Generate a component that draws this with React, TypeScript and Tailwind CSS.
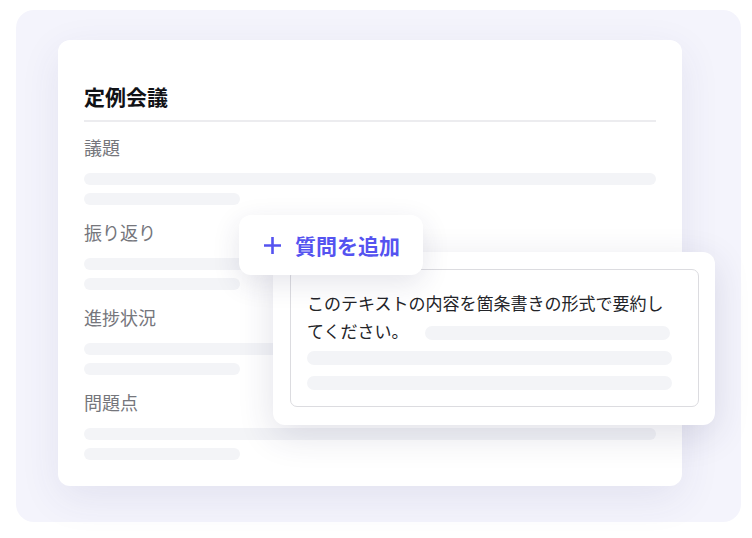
import React from 'react';

const SECTIONS = ['議題', '振り返り', '進捗状況', '問題点'];

function Bars() {
  return (
    <>
      <div className="mt-[14px] h-[12px] w-full rounded-full bg-[#f3f4f7]" />
      <div className="mt-[8px] h-[12px] w-[156px] rounded-full bg-[#f3f4f7]" />
    </>
  );
}

export default function App() {
  return (
    <div
      className="w-[752px] h-[538px] bg-white overflow-hidden pt-[10px] pl-4"
      style={{ fontFamily: '"Noto Sans CJK JP", "Noto Sans", sans-serif' }}
    >
      <div className="relative w-[725px] h-[512px] rounded-[18px] bg-[#f4f4fc] pt-[30px] pl-[42px]">
        {/* Meeting notes card */}
        <div className="w-[624px] h-[446px] rounded-[12px] bg-white px-[26px] pt-[43px] shadow-[0_12px_40px_rgba(60,60,120,0.09)]">
          <h1 className="text-[21px] leading-[26px] font-bold text-[#111216]">定例会議</h1>
          <div className="mt-[11px] h-[2px] bg-[#ececef]" />
          {SECTIONS.map((s, i) => (
            <div key={s} className={i === 0 ? 'mt-[13px]' : 'mt-[15px]'}>
              <div className="text-[18px] leading-[24px] text-[#75767c]">{s}</div>
              <Bars />
            </div>
          ))}
        </div>

        {/* Prompt card */}
        <div className="absolute left-[257px] top-[242px] w-[442px] h-[173px] rounded-[12px] bg-white p-[17px] pr-4 shadow-[0_10px_36px_rgba(40,40,90,0.14)]">
          <div className="h-[138px] rounded-[7px] border border-[#dcdce0] pl-[16px] pr-[26px] pt-[19px]">
            <p className="text-[17px] leading-[28px] text-[#232428]">
              このテキストの内容を箇条書きの形式で要約してください。
              <span className="ml-4 inline-block h-[14px] w-[245px] rounded-full bg-[#f3f4f7] align-middle" />
            </p>
            <div className="mt-[6px] h-[14px] rounded-full bg-[#f3f4f7]" />
            <div className="mt-[11px] h-[14px] rounded-full bg-[#f3f4f7]" />
          </div>
        </div>

        {/* Add question button */}
        <div className="absolute left-[223px] top-[205px] w-[184px] h-[60px] rounded-[12px] bg-white flex items-center pl-[24px] gap-[13px] shadow-[0_8px_28px_rgba(40,40,90,0.12)]">
          <svg width="19" height="19" viewBox="0 0 19 19" fill="none">
            <path d="M9.5 1v17M1 9.5h17" stroke="#5553f0" strokeWidth="2.6" strokeLinecap="butt" />
          </svg>
          <span className="text-[21px] leading-[26px] font-bold text-[#5553f0]">質問を追加</span>
        </div>
      </div>
    </div>
  );
}
